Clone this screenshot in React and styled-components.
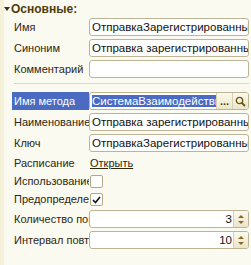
import React from 'react';
import styled, { createGlobalStyle } from 'styled-components';

const Global = createGlobalStyle`
  html, body {
    margin: 0;
    padding: 0;
    background: #fbfaf1;
  }
  body {
    font-family: Arial, "Liberation Sans", sans-serif;
    font-size: 11px;
    color: #2d2710;
  }
`;

const Page = styled.div`
  display: flex;
  width: 251px;
  height: 265px;
  overflow: hidden;
  background: #fbfaf1;
`;

const Stripe = styled.div`
  width: 4px;
  flex: none;
  background: #f6f2da;
`;

const Content = styled.div`
  flex: 1;
  min-width: 0;
  padding: 2px 2px 0 0;
`;

const GroupTitle = styled.div`
  display: flex;
  align-items: center;
  height: 14px;
  font-weight: bold;
  font-size: 12px;
  color: #4e3c0c;
  margin-bottom: 2px;
`;

const Caret = styled.span`
  width: 0;
  height: 0;
  border-left: 3px solid transparent;
  border-right: 3px solid transparent;
  border-top: 4px solid #3a2e10;
  margin: 0 1px 0 0;
`;

const Body = styled.div`
  padding-left: 10px;
`;

const Form = styled.div`
  display: grid;
  grid-template-columns: 75px 1fr;
  row-gap: 3px;
  align-items: center;
`;

const Label = styled.div`
  height: ${p => p.h || 18}px;
  line-height: ${p => p.h || 18}px;
  white-space: nowrap;
  overflow: hidden;
  padding-left: ${p => (p.active ? 2 : 0)}px;
  margin-left: ${p => (p.active ? -2 : 0)}px;
  background: ${p => (p.active ? '#4b6bc3' : 'transparent')};
  color: ${p => (p.active ? '#ffffff' : '#2d2710')};
`;

const Field = styled.div`
  display: flex;
  align-items: center;
  height: ${p => p.h || 18}px;
  min-width: 0;
`;

const Box = styled.div`
  flex: 1;
  min-width: 0;
  height: 18px;
  box-sizing: border-box;
  display: flex;
  align-items: center;
  background: #ffffff;
  border: 1px solid #bdb496;
  border-radius: 3px;
  overflow: hidden;
`;

const BoxText = styled.span`
  flex: 1;
  min-width: 0;
  padding: 0 1px 0 2px;
  white-space: nowrap;
  overflow: hidden;
  text-align: ${p => (p.right ? 'right' : 'left')};
  font-size: 11.5px;
  color: #111;
`;

const Selected = styled.span`
  background: #4b6bc3;
  color: #fff;
`;

const Btn = styled.div`
  flex: none;
  width: 15px;
  height: 16px;
  display: flex;
  align-items: center;
  justify-content: center;
  background: linear-gradient(#fbf9ee, #ece6c8);
  border-left: 1px solid #d8d0b2;
  color: #4e3c0c;
  font-weight: bold;
  font-size: 11px;
  line-height: 10px;
`;

const Spin = styled.div`
  flex: none;
  width: 14px;
  height: 16px;
  display: flex;
  flex-direction: column;
  align-items: center;
  justify-content: center;
  gap: 3px;
  background: linear-gradient(#fbf9ee, #ece6c8);
  border-left: 1px solid #d8d0b2;
`;

const Tri = styled.span`
  width: 0;
  height: 0;
  border-left: 3px solid transparent;
  border-right: 3px solid transparent;
  ${p => (p.down ? 'border-top: 3px solid #8a6a1e;' : 'border-bottom: 3px solid #8a6a1e;')}
`;

const Link = styled.a`
  color: #2d2710;
  text-decoration: underline;
  padding-left: 1px;
  font-size: 11px;
`;

const Check = styled.div`
  width: 13px;
  height: 13px;
  box-sizing: border-box;
  margin-left: 1px;
  border: 1px solid #b1a885;
  border-radius: 2px;
  background: #fff;
  display: flex;
  align-items: center;
  justify-content: center;
`;

const Separator = styled.div`
  grid-column: 1 / -1;
  height: 1px;
  background: #ddd7c0;
  margin: 2px 0 5px;
`;

const Text = ({ children }) => (
  <Field>
    <Box>
      <BoxText>{children}</BoxText>
    </Box>
  </Field>
);

const Num = ({ value }) => (
  <Field>
    <Box>
      <BoxText right>{value}</BoxText>
      <Spin>
        <Tri />
        <Tri down />
      </Spin>
    </Box>
  </Field>
);

const Checkbox = ({ checked }) => (
  <Field h={15}>
    <Check>
      {checked && (
        <svg width="9" height="8" viewBox="0 0 9 8">
          <path d="M1 4 L3.5 6.5 L8 1" fill="none" stroke="#111" strokeWidth="1.6" />
        </svg>
      )}
    </Check>
  </Field>
);

export default function App() {
  return (
    <Page>
      <Global />
      <Stripe />
      <Content>
        <GroupTitle>
          <Caret />
          Основные:
        </GroupTitle>
        <Body>
          <Form>
            <Label>Имя</Label>
            <Text>ОтправкаЗарегистрированных</Text>
            <Label>Синоним</Label>
            <Text>Отправка зарегистрированных</Text>
            <Label>Комментарий</Label>
            <Text></Text>
            <Separator />
            <Label active>Имя метода</Label>
            <Field>
              <Box>
                <BoxText>
                  <Selected>СистемаВзаимодействия</Selected>
                </BoxText>
                <Btn>...</Btn>
                <Btn>
                  <svg width="11" height="11" viewBox="0 0 11 11">
                    <circle cx="4.5" cy="4.5" r="3.2" fill="none" stroke="#6b5414" strokeWidth="1.3" />
                    <path d="M7 7 L10 10" stroke="#6b5414" strokeWidth="1.8" />
                  </svg>
                </Btn>
              </Box>
            </Field>
            <Label>Наименование</Label>
            <Text>Отправка зарегистрированных</Text>
            <Label>Ключ</Label>
            <Text>ОтправкаЗарегистрированных</Text>
            <Label h={16}>Расписание</Label>
            <Field h={16}>
              <Link>Открыть</Link>
            </Field>
            <Label h={15}>Использование</Label>
            <Checkbox />
            <Label h={15}>Предопределенное</Label>
            <Checkbox checked />
            <Label>Количество повторов</Label>
            <Num value="3" />
            <Label>Интервал повтора</Label>
            <Num value="10" />
          </Form>
        </Body>
      </Content>
    </Page>
  );
}
